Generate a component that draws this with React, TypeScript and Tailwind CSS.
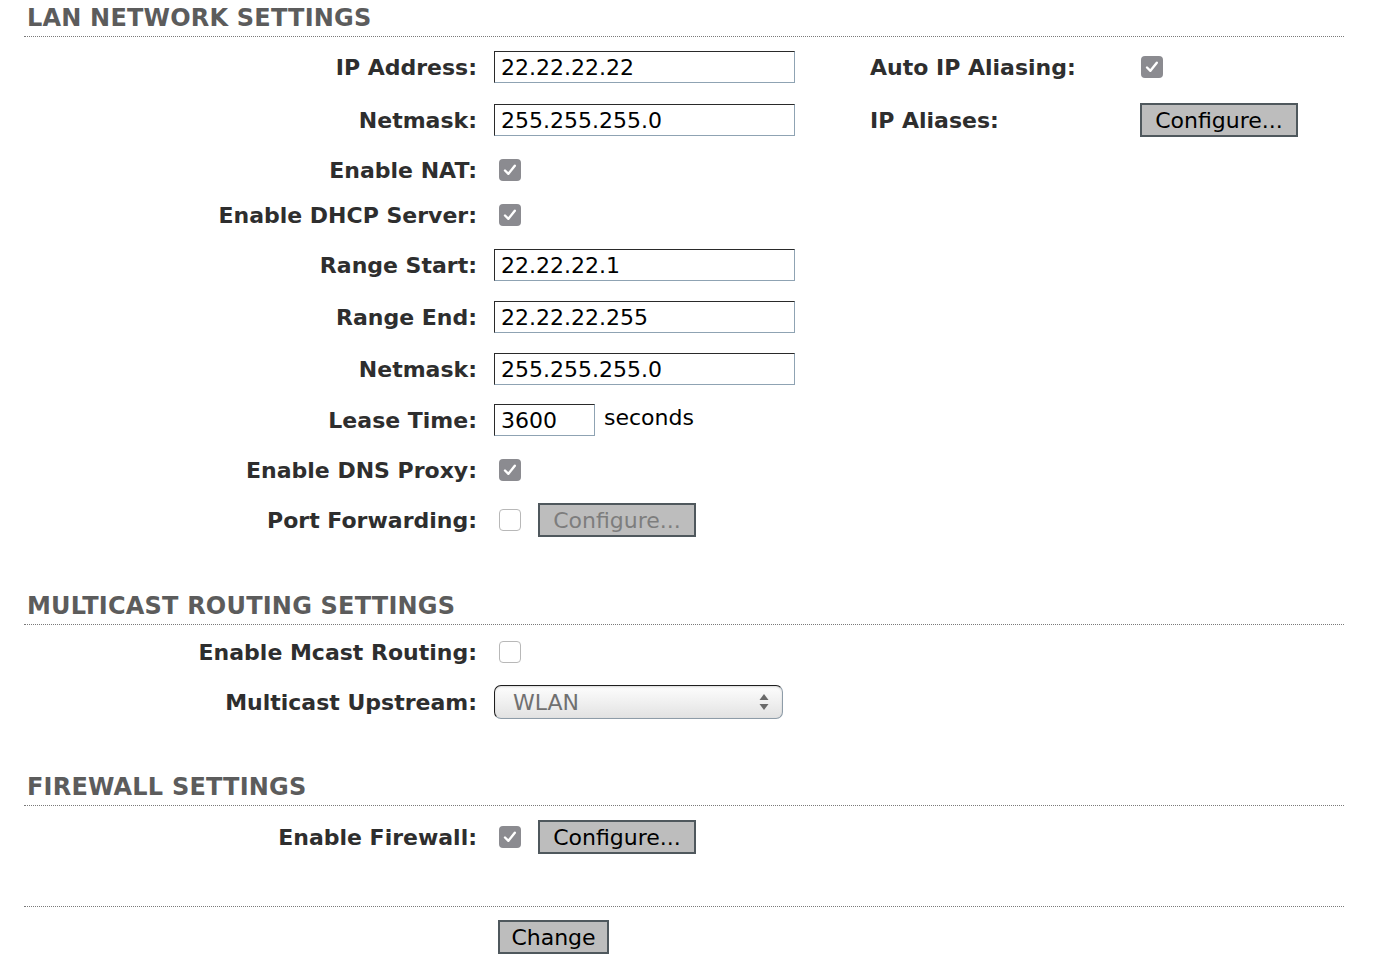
import React from "react";

const font = "font-['Verdana','DejaVu_Sans',sans-serif]";

function SectionHeader({ title, className = "" }: { title: string; className?: string }) {
  return (
    <div className={`h-[37px] flex items-center pl-[3px] border-b border-dotted border-[#7a7a7a] ${className}`}>
      <h2 className="text-[24px] font-bold text-[#5c5c5c] tracking-[0.2px] leading-none">{title}</h2>
    </div>
  );
}

function Checkbox({ checked }: { checked?: boolean }) {
  if (checked) {
    return (
      <div className="w-[22px] h-[22px] rounded-[4px] bg-[#8b8b90] flex items-center justify-center shrink-0">
        <svg width="16" height="16" viewBox="0 0 16 16" fill="none">
          <path d="M3 8.5 L6.4 11.8 L12.8 3.8" stroke="white" strokeWidth="2.4" strokeLinecap="round" strokeLinejoin="round" />
        </svg>
      </div>
    );
  }
  return <div className="w-[22px] h-[22px] rounded-[4px] bg-white border border-[#b8b8b8] shrink-0" />;
}

function TextInput({ value, w = "w-[301px]" }: { value: string; w?: string }) {
  return (
    <div
      className={`${w} h-[32px] flex items-center pl-[6px] text-[22px] text-black border border-t-[#2a2a2a] border-l-[#2a2a2a] border-b-[#8fa3b3] border-r-[#8fa3b3] bg-white`}
    >
      {value}
    </div>
  );
}

function Btn({ children, disabled, w }: { children: React.ReactNode; disabled?: boolean; w: string }) {
  return (
    <div
      className={`${w} h-[34px] flex items-center justify-center bg-[#bdbdbd] border-2 border-[#4f585d] text-[22px] ${
        disabled ? "text-[#7d7d7d]" : "text-black"
      }`}
    >
      {children}
    </div>
  );
}

function Row({ label, h, children, right }: { label: string; h: string; children?: React.ReactNode; right?: React.ReactNode }) {
  return (
    <div className={`flex items-center ${h}`}>
      <div className="w-[453px] text-right text-[22px] font-bold text-[#2e2e2e]">{label}</div>
      <div className="w-[17px]" />
      <div className="w-[376px] flex items-center">{children}</div>
      {right}
    </div>
  );
}

function CheckCell({ checked }: { checked?: boolean }) {
  return (
    <div className="pl-[5px]">
      <Checkbox checked={checked} />
    </div>
  );
}

export default function App() {
  return (
    <div className={`w-[1389px] h-[975px] bg-white ${font} overflow-hidden`}>
      <div className="ml-[24px] w-[1320px]">
        <SectionHeader title="LAN NETWORK SETTINGS" />
        <div className="mt-[4px]">
          <Row
            label="IP Address:"
            h="h-[52px]"
            right={
              <div className="flex items-center">
                <div className="w-[270px] text-[22px] font-bold text-[#2e2e2e]">Auto IP Aliasing:</div>
                <div className="pl-[1px]">
                  <Checkbox checked />
                </div>
              </div>
            }
          >
            <TextInput value="22.22.22.22" />
          </Row>
          <Row
            label="Netmask:"
            h="h-[54px]"
            right={
              <div className="flex items-center">
                <div className="w-[270px] text-[22px] font-bold text-[#2e2e2e]">IP Aliases:</div>
                <Btn w="w-[158px]">Configure...</Btn>
              </div>
            }
          >
            <TextInput value="255.255.255.0" />
          </Row>
          <Row label="Enable NAT:" h="h-[46px]">
            <CheckCell checked />
          </Row>
          <Row label="Enable DHCP Server:" h="h-[44px]">
            <CheckCell checked />
          </Row>
          <Row label="Range Start:" h="h-[56px]">
            <TextInput value="22.22.22.1" />
          </Row>
          <Row label="Range End:" h="h-[48px]">
            <TextInput value="22.22.22.255" />
          </Row>
          <Row label="Netmask:" h="h-[56px]">
            <TextInput value="255.255.255.0" />
          </Row>
          <Row label="Lease Time:" h="h-[46px]">
            <TextInput value="3600" w="w-[101px]" />
            <span className="ml-[9px] text-[22px] text-black -mt-[6px]">seconds</span>
          </Row>
          <Row label="Enable DNS Proxy:" h="h-[54px]">
            <CheckCell checked />
          </Row>
          <Row label="Port Forwarding:" h="h-[46px]">
            <CheckCell />
            <div className="ml-[17px]">
              <Btn w="w-[158px]" disabled>
                Configure...
              </Btn>
            </div>
          </Row>
        </div>

        <SectionHeader title="MULTICAST ROUTING SETTINGS" className="mt-[45px]" />
        <div className="mt-[2px]">
          <Row label="Enable Mcast Routing:" h="h-[50px]">
            <CheckCell />
          </Row>
          <Row label="Multicast Upstream:" h="h-[50px]">
            <div className="w-[289px] h-[34px] rounded-[7px] border border-[#8e9ca8] border-t-[#1e1e1e] border-l-[#1e1e1e] bg-gradient-to-b from-[#fdfdfd] via-[#f0f0f0] to-[#e2e2e2] flex items-center justify-between pl-[18px] pr-[12px] shadow-[inset_0_1px_2px_rgba(0,0,0,0.15)]">
              <span className="text-[22px] text-[#707070]">WLAN</span>
              <svg width="12" height="22" viewBox="0 0 12 22">
                <path d="M6 3 L10.5 9 L1.5 9 Z" fill="#6a6a6a" />
                <path d="M6 19 L10.5 13 L1.5 13 Z" fill="#6a6a6a" />
              </svg>
            </div>
          </Row>
        </div>

        <SectionHeader title="FIREWALL SETTINGS" className="mt-[42px]" />
        <Row label="Enable Firewall:" h="h-[62px]">
          <CheckCell checked />
          <div className="ml-[17px]">
            <Btn w="w-[158px]">Configure...</Btn>
          </div>
        </Row>

        <div className="h-[39px] border-b border-dotted border-[#7a7a7a]" />
        <div className="h-[60px] flex items-center pl-[474px]">
          <Btn w="w-[111px]">Change</Btn>
        </div>
      </div>
    </div>
  );
}
